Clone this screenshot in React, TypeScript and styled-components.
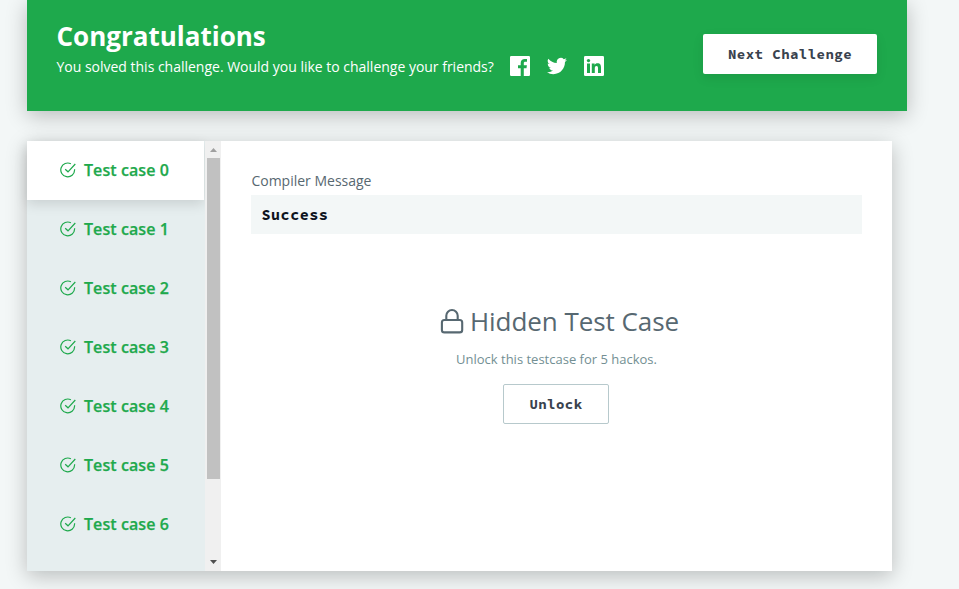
import React from "react";
import styled, { createGlobalStyle } from "styled-components";

const GlobalStyle = createGlobalStyle`
  * { box-sizing: border-box; }
  html, body { margin: 0; background: #f3f7f7; overflow: hidden; }
  body { font-family: "Open Sans", "Noto Sans", sans-serif; }
`;

const Page = styled.main`
  height: 589px;
  padding: 0 52px 0 27px;
  overflow: hidden;
`;

const Banner = styled.header`
  display: flex;
  justify-content: space-between;
  align-items: flex-start;
  height: 111px;
  padding: 19px 30px 0 29.5px;
  background: #1ea94c;
  color: #fff;
  box-shadow: 0 5px 20px rgba(0, 0, 0, 0.24);
`;

const Title = styled.h1`
  margin: 0;
  font-size: 26px;
  line-height: 35px;
  font-weight: 700;
`;

const ShareRow = styled.div`
  display: flex;
  align-items: center;
  height: 24px;
  font-size: 14px;
  white-space: nowrap;
`;

const ShareText = styled.span`
  width: 453.5px;
  letter-spacing: -0.01px;
`;

const ShareIcons = styled.div`
  display: flex;
  gap: 17px;
`;

const Button = styled.button<{ $outlined?: boolean }>`
  width: ${(p) => (p.$outlined ? 106 : 174)}px;
  height: 40px;
  margin-top: ${(p) => (p.$outlined ? 0 : 15)}px;
  padding: 0;
  border: ${(p) => (p.$outlined ? "1px solid #b7c9cc" : "0")};
  border-radius: 2px;
  background: #fff;
  color: #39424e;
  font: 700 14px "Source Code Pro", "DejaVu Sans Mono", monospace;
  letter-spacing: 0.47px;
  box-shadow: ${(p) => (p.$outlined ? "none" : "0 4px 12px rgba(0, 0, 0, 0.09)")};
`;

const Panel = styled.section`
  display: flex;
  width: 865px;
  height: 430px;
  margin-top: 30px;
  background: #fff;
  box-shadow: 0 5px 20px rgba(0, 0, 0, 0.24);
`;

const CaseList = styled.nav`
  width: 178px;
  padding-right: 1px;
  background: #e6eeef;
`;

const CaseTab = styled.div<{ $active: boolean }>`
  display: flex;
  align-items: center;
  gap: 8px;
  height: 59px;
  padding: 0 0 2px 33px;
  color: #1ea94c;
  background: ${(p) => (p.$active ? "#fff" : "transparent")};
  box-shadow: ${(p) => (p.$active ? "0 4px 12px rgba(0, 0, 0, 0.13)" : "none")};
  font-size: 16px;
  font-weight: 600;
  letter-spacing: 0.08px;
  -webkit-text-stroke: 0.25px currentColor;
  white-space: nowrap;
`;

const ScrollTrack = styled.div`
  display: flex;
  flex-direction: column;
  justify-content: space-between;
  width: 16px;
  padding: 0 1px 0 2px;
  background: #f0f0f0;
`;

const ScrollArrow = styled.svg`
  display: block;
  width: 13px;
  height: 17px;
`;

const ScrollThumb = styled.div`
  height: 321px;
  margin-bottom: auto;
  background: #c1c1c1;
`;

const Details = styled.div`
  flex: 1;
  padding: 30px;
`;

const Label = styled.div`
  height: 24px;
  padding-left: 0.4px;
  line-height: 20px;
  font-size: 14px;
  font-weight: 400;
  color: #576871;
`;

const Message = styled.div`
  height: 39px;
  padding-left: 10.5px;
  background: #f3f7f7;
  color: #0e141e;
  font: 700 15px/39px "Source Code Pro", "DejaVu Sans Mono", monospace;
  letter-spacing: 0.55px;
`;

const Hidden = styled.div`
  display: flex;
  flex-direction: column;
  align-items: center;
  padding: 68px 1px 0 0;
`;

const HiddenTitle = styled.h2`
  display: flex;
  align-items: center;
  gap: 6px;
  height: 37px;
  margin: 0 0 0 7px;
  color: #576871;
  font-size: 26px;
  font-weight: 400;
  letter-spacing: -0.05px;
  white-space: nowrap;
`;

const Hint = styled.p`
  height: 20px;
  margin: 10px 0 15px 1px;
  color: #738f93;
  font-size: 13px;
  line-height: 20px;
`;

const CheckIcon = () => (
  <svg width="16" height="16" viewBox="0 0 16 16" fill="none" stroke="currentColor" strokeWidth="1.2">
    <path d="M14.6 7.2V8A6.9 6.9 0 1 1 10.9 1.8" />
    <path d="M5.2 7.2L8 9.8L15.3 2" />
  </svg>
);

const FacebookIcon = () => (
  <svg width="20" height="20" viewBox="0 0 20 20" fill="currentColor">
    <path d="M1.2 0H18.8Q20 0 20 1.2V18.8Q20 20 18.8 20H13.8V12.3H16.5L16.9 9.2H13.8V7.3C13.8 6.3 14.1 5.8 15.4 5.8H17V3.1C16.6 3 15.7 2.9 14.7 2.9C12.3 2.9 10.7 4.4 10.7 6.9V9.2H8V12.3H10.7V20H1.2Q0 20 0 18.8V1.2Q0 0 1.2 0Z" />
  </svg>
);

const TwitterIcon = () => (
  <svg width="20" height="20" viewBox="0 0 24 24" fill="currentColor">
    <path d="M23.95 4.57a10 10 0 0 1-2.83.78 4.96 4.96 0 0 0 2.16-2.72c-.95.55-2 .95-3.12 1.18a4.92 4.92 0 0 0-8.38 4.48C7.69 8.1 4.07 6.13 1.64 3.16a4.93 4.93 0 0 0 1.52 6.57 4.9 4.9 0 0 1-2.23-.61v.06a4.92 4.92 0 0 0 3.95 4.83 5 5 0 0 1-2.21.08 4.93 4.93 0 0 0 4.6 3.42A9.87 9.87 0 0 1 0 19.54a13.94 13.94 0 0 0 7.55 2.21c9.05 0 14-7.5 14-13.98 0-.21 0-.42-.02-.63a9.93 9.93 0 0 0 2.42-2.57Z" />
  </svg>
);

const LinkedInIcon = () => (
  <svg width="20" height="20" viewBox="0 0 20 20">
    <rect width="20" height="20" rx="1.3" fill="#fff" />
    <g fill="#1ea94c">
      <circle cx="4.5" cy="4.6" r="1.65" />
      <path d="M3 7.6H6V17H3ZM7.8 7.6H10.6V8.9C11.1 8 12.1 7.3 13.5 7.3C16.4 7.3 17 9.2 17 11.8V17H14V12.4C14 11.1 13.9 9.9 12.5 9.9C11 9.9 10.8 11 10.8 12.3V17H7.8Z" />
    </g>
  </svg>
);

const LockIcon = () => (
  <svg width="24" height="26" viewBox="0 0 24 26" fill="none" stroke="currentColor" strokeWidth="2.1">
    <rect x="1.9" y="12" width="20.3" height="12.4" rx="2.5" />
    <path d="M6.3 12V7.7A5.7 5.7 0 0 1 17.7 7.7V12" />
  </svg>
);

const cases = [0, 1, 2, 3, 4, 5, 6];

export default function App() {
  return (
    <Page>
      <GlobalStyle />
      <Banner>
        <div>
          <Title>Congratulations</Title>
          <ShareRow>
            <ShareText>You solved this challenge. Would you like to challenge your friends?</ShareText>
            <ShareIcons>
              <FacebookIcon />
              <TwitterIcon />
              <LinkedInIcon />
            </ShareIcons>
          </ShareRow>
        </div>
        <Button>Next Challenge</Button>
      </Banner>
      <Panel>
        <CaseList>
          {cases.map((n) => (
            <CaseTab key={n} $active={n === 0}>
              <CheckIcon />
              Test case {n}
            </CaseTab>
          ))}
        </CaseList>
        <ScrollTrack>
          <ScrollArrow viewBox="0 0 13 17">
            <path d="M3 11L6.5 7L10 11Z" fill="#a0a0a0" />
          </ScrollArrow>
          <ScrollThumb />
          <ScrollArrow viewBox="0 0 13 17">
            <path d="M3 6L6.5 10L10 6Z" fill="#505050" />
          </ScrollArrow>
        </ScrollTrack>
        <Details>
          <Label>Compiler Message</Label>
          <Message>Success</Message>
          <Hidden>
            <HiddenTitle>
              <LockIcon />
              Hidden Test Case
            </HiddenTitle>
            <Hint>Unlock this testcase for 5 hackos.</Hint>
            <Button $outlined>Unlock</Button>
          </Hidden>
        </Details>
      </Panel>
    </Page>
  );
}
